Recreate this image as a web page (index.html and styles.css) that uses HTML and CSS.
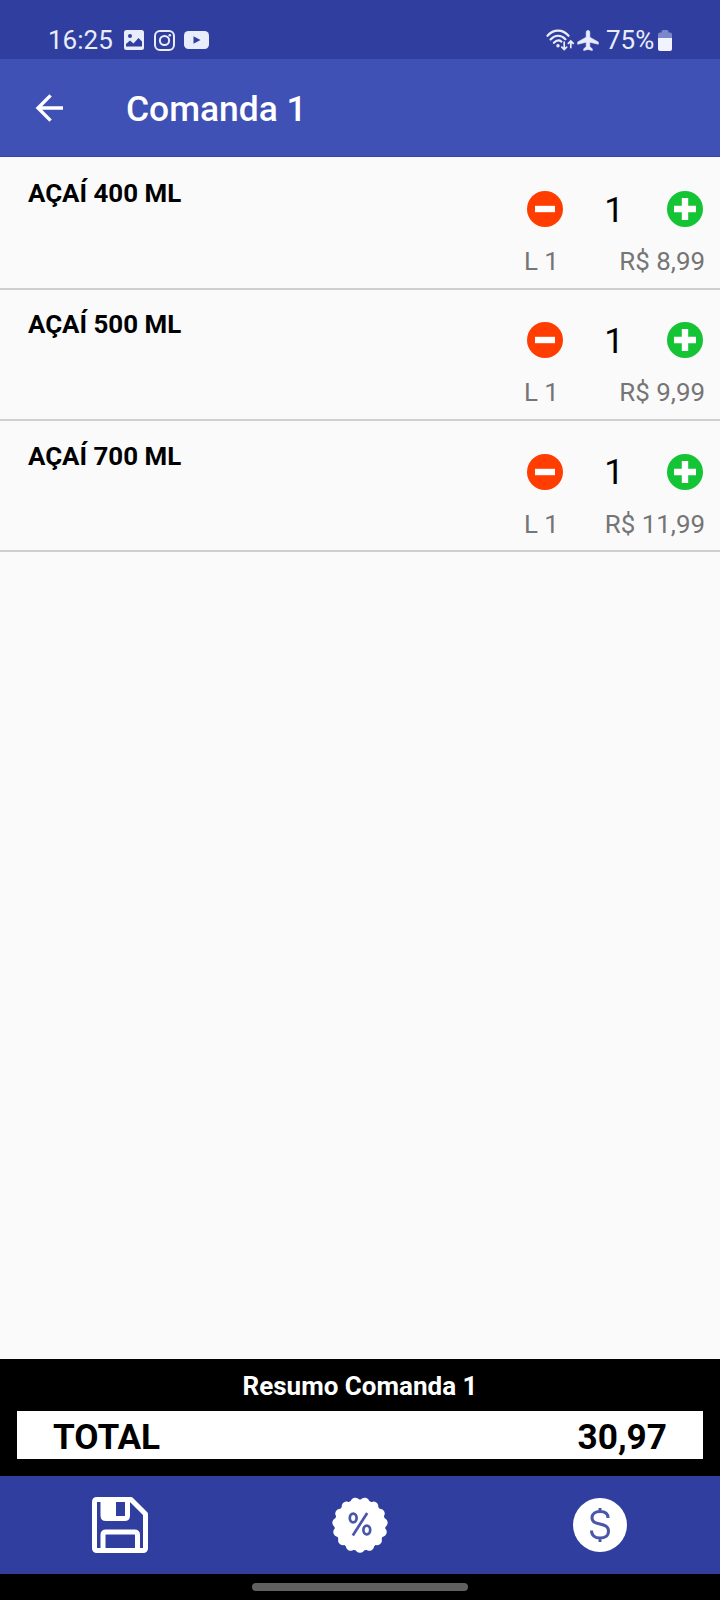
FILE: index.html
```
<!DOCTYPE html>
<html lang="pt-BR">
<head>
    <meta charset="UTF-8">
    <meta name="viewport" content="width=device-width, initial-scale=1.0">
    <title>Comanda 1</title>
    <link rel="stylesheet" href="styles.css">
</head>
<body>

    <!-- Status bar -->
    <div class="status-bar">
        <span class="clock">16:25</span>
        <svg class="icon-picture" width="20" height="20" viewBox="0 0 20 20">
            <rect width="20" height="20" rx="2.5" fill="#e9ecfb"/>
            <circle cx="6" cy="6" r="2" fill="#303f9f"/>
            <path d="M2 16.5V14L6 10.5L9.5 13.5L14.5 8L18 11.5V16.5Z" fill="#303f9f"/>
        </svg>
        <svg class="icon-instagram" width="21" height="21" viewBox="0 0 21 21" fill="none" stroke="#e9ecfb" stroke-width="2">
            <rect x="1" y="1" width="19" height="19" rx="5"/>
            <circle cx="10.5" cy="10.5" r="4.6"/>
            <circle cx="15.8" cy="5.2" r="1.3" fill="#e9ecfb" stroke="none"/>
        </svg>
        <svg class="icon-youtube" width="25" height="18" viewBox="0 0 25 18">
            <rect width="25" height="18" rx="4.5" fill="#e9ecfb"/>
            <path d="M9.5 5.2L16.5 9L9.5 12.8Z" fill="#303f9f"/>
        </svg>
        <div class="status-right">
            <svg width="28" height="22" viewBox="0 0 28 22" fill="none" stroke="#e9ecfb" stroke-width="2.2" stroke-linecap="round">
                <path d="M1.5 6.8C7.5 0 16.5 0 22.5 6.8M4.6 10.4C9.2 5.6 15 5.6 19.4 10.2M7.9 13.8C10.6 11 13.4 11 15.4 12.6"/>
                <circle cx="12" cy="16.7" r="1.7" fill="#e9ecfb" stroke="none"/>
                <path d="M18.2 13.2V20.4M15.8 18.2L18.2 20.6L20.6 18.2M24.8 18.6V12.4M22.4 14.4L24.8 12L27.2 14.4" stroke-width="1.7"/>
            </svg>
            <svg class="icon-plane" width="22" height="21" viewBox="0 0 22 21">
                <path d="M11 0.2C12.2 0.2 12.8 1.2 12.8 2.5V7.2L21.3 12V14.3L12.8 12.2V16.8L15.3 18.8V20.6L11 19.4L6.7 20.6V18.8L9.2 16.8V12.2L0.7 14.3V12L9.2 7.2V2.5C9.2 1.2 9.8 0.2 11 0.2Z" fill="#e9ecfb" stroke="#e9ecfb" stroke-width="0.6"/>
            </svg>
            <span class="battery-text">75%</span>
            <svg class="icon-battery" width="14" height="21" viewBox="0 0 14 21">
                <path d="M0 8V4.5Q0 2.5 2 2.5H3.5V1.5Q3.5 0 5 0H9Q10.5 0 10.5 1.5V2.5H12Q14 2.5 14 4.5V8Z" fill="#7b86cb"/>
                <path d="M0 8H14V19Q14 21 12 21H2Q0 21 0 19Z" fill="#f1f3ff"/>
            </svg>
        </div>
    </div>

    <!-- App bar -->
    <div class="app-bar">
        <svg width="28" height="28" viewBox="0 0 28 28" fill="none" stroke="#fff" stroke-width="3.4">
            <path d="M28 14H3M15.6 1.4L3 14L15.6 26.6"/>
        </svg>
        <h1>Comanda 1</h1>
    </div>

    <!-- Items -->
    <div class="items">
        <div class="item">
            <div class="item-name">AÇAÍ 400 ML</div>
            <div class="item-side">
                <div class="quantity">
                    <svg width="36" height="36" viewBox="0 0 36 36"><circle cx="18" cy="18" r="18" fill="#ff3d00"/><path d="M8 18H28" stroke="#fff" stroke-width="6.4"/></svg>
                    <span>1</span>
                    <svg width="36" height="36" viewBox="0 0 36 36"><circle cx="18" cy="18" r="18" fill="#14c435"/><path d="M7 18H29M18 7V29" stroke="#fff" stroke-width="6.4"/></svg>
                </div>
                <div class="price"><span>L 1</span><span>R$ 8,99</span></div>
            </div>
        </div>
        <div class="item">
            <div class="item-name">AÇAÍ 500 ML</div>
            <div class="item-side">
                <div class="quantity">
                    <svg width="36" height="36" viewBox="0 0 36 36"><circle cx="18" cy="18" r="18" fill="#ff3d00"/><path d="M8 18H28" stroke="#fff" stroke-width="6.4"/></svg>
                    <span>1</span>
                    <svg width="36" height="36" viewBox="0 0 36 36"><circle cx="18" cy="18" r="18" fill="#14c435"/><path d="M7 18H29M18 7V29" stroke="#fff" stroke-width="6.4"/></svg>
                </div>
                <div class="price"><span>L 1</span><span>R$ 9,99</span></div>
            </div>
        </div>
        <div class="item">
            <div class="item-name">AÇAÍ 700 ML</div>
            <div class="item-side">
                <div class="quantity">
                    <svg width="36" height="36" viewBox="0 0 36 36"><circle cx="18" cy="18" r="18" fill="#ff3d00"/><path d="M8 18H28" stroke="#fff" stroke-width="6.4"/></svg>
                    <span>1</span>
                    <svg width="36" height="36" viewBox="0 0 36 36"><circle cx="18" cy="18" r="18" fill="#14c435"/><path d="M7 18H29M18 7V29" stroke="#fff" stroke-width="6.4"/></svg>
                </div>
                <div class="price"><span>L 1</span><span>R$ 11,99</span></div>
            </div>
        </div>
    </div>

    <!-- Summary -->
    <div class="summary">
        <div class="summary-title">Resumo Comanda 1</div>
        <div class="total">
            <span>TOTAL</span>
            <span>30,97</span>
        </div>
    </div>

    <!-- Bottom actions -->
    <div class="actions">
        <div class="action">
            <svg width="56" height="56" viewBox="0 0 56 56" fill="none" stroke="#fff" stroke-width="5" stroke-linejoin="round">
                <path d="M5 2.5H39L53.5 17V51Q53.5 53.5 51 53.5H5Q2.5 53.5 2.5 51V5Q2.5 2.5 5 2.5Z"/>
                <path d="M11 2.5V18.5Q11 21.5 14 21.5H32.5Q35.5 21.5 35.5 18.5V2.5M11 53.5V38Q11 35 14 35H42.5Q45.5 35 45.5 38V53.5"/>
                <path d="M10 3H24V22H12Q10 22 10 20Z" fill="#fff" stroke="none"/>
            </svg>
        </div>
        <div class="action">
            <svg width="56" height="56" viewBox="0 0 56 56" fill="none">
                <circle cx="28" cy="28" r="25.6" fill="#fff"/>
                <!-- round dashes make the scalloped edge -->
                <circle cx="28" cy="28" r="23" stroke="#fff" stroke-width="9.6" stroke-linecap="round" pathLength="15" stroke-dasharray="0.001 0.999" transform="rotate(90 28 28)"/>
                <g stroke="#4a56a8" stroke-width="2.7">
                    <ellipse cx="21.2" cy="21" rx="3.4" ry="4.4"/>
                    <ellipse cx="34.8" cy="33" rx="3.4" ry="4.4"/>
                    <path d="M35.2 16L20.8 38.5"/>
                </g>
            </svg>
        </div>
        <div class="action">
            <svg width="56" height="56" viewBox="0 0 56 56" fill="none">
                <circle cx="28" cy="28" r="27" fill="#fff"/>
                <path d="M36 21C36 16.5 32.5 14.5 28 14.5C23.2 14.5 20 17 20 20.8C20 30 36.5 24 36.5 34.2C36.5 38.5 33 41 28 41C23 41 19.5 38.5 19.5 33.5M28 11V14.5M28 41V45" stroke="#4a56a8" stroke-width="3"/>
            </svg>
        </div>
    </div>

    <div class="gesture-bar"><div class="handle"></div></div>

</body>
</html>
```
FILE: styles.css
```
* {
    margin: 0;
    padding: 0;
    box-sizing: border-box;
}

body {
    font-family: Roboto, sans-serif;
    background-color: #fafafa;
    width: 720px;
    height: 1600px;
    display: flex;
    flex-direction: column;
    overflow: hidden;
}

svg {
    display: block;
    flex-shrink: 0;
}

/* Status bar */
.status-bar {
    height: 59px;
    padding: 21px 48px 0;
    display: flex;
    align-items: center;
    background-color: #303f9f;
    color: #e9ecfb;
    font-size: 26px;
    line-height: 36px;
}

.clock {
    width: 76px;
}

.icon-instagram {
    margin-left: 10px;
}

.icon-youtube {
    margin-left: 9px;
}

.status-right {
    margin-left: auto;
    display: flex;
    align-items: center;
}

.icon-plane {
    margin-left: 3px;
}

.battery-text {
    margin-left: 7px;
    width: 50px;
}

.icon-battery {
    margin-left: 2px;
}

/* App bar */
.app-bar {
    height: 98px;
    padding-left: 35px;
    display: flex;
    align-items: center;
    background-color: #3f51b5;
    border-bottom: 1px solid #36469f;
    color: #fff;
}

.app-bar h1 {
    margin-left: 63px;
    padding-top: 2px;
    font-size: 35.4px;
    font-weight: 500;
}

/* Items */
.items {
    flex: 1;
}

.item {
    height: 131.4px;
    padding: 19.6px 15px 0 28px;
    display: flex;
    justify-content: space-between;
    border-bottom: 2px solid #cfcfcf;
}

.item:first-child {
    height: 132.6px;
    padding-top: 21px;
}

.item-name {
    font-size: 25.9px;
    line-height: 30px;
    font-weight: 700;
    color: #000;
}

.item-side {
    width: 181px;
    padding-top: 13px;
}

.quantity {
    padding: 0 2px 0 3px;
    display: flex;
    align-items: center;
    justify-content: space-between;
    height: 36px;
    font-size: 35px;
    color: #000;
}

.quantity span {
    padding: 2px 2px 0 0;
}

.price {
    margin-top: 19px;
    display: flex;
    justify-content: space-between;
    font-size: 25.9px;
    line-height: 30px;
    color: #757575;
}

/* Summary */
.summary {
    height: 117px;
    padding: 12px 17px 0;
    background-color: #000;
}

.summary-title {
    font-size: 26px;
    line-height: 30px;
    font-weight: 700;
    color: #fff;
    text-align: center;
}

.total {
    height: 48px;
    margin-top: 10px;
    padding: 3px 36px 0;
    display: flex;
    align-items: center;
    justify-content: space-between;
    background-color: #fff;
    color: #000;
    font-size: 35.2px;
    font-weight: 700;
}

/* Bottom actions */
.actions {
    height: 98px;
    display: flex;
    background-color: #303f9f;
}

.action {
    flex: 1;
    display: flex;
    align-items: center;
    justify-content: center;
}

.gesture-bar {
    height: 26px;
    padding-top: 9px;
    background-color: #000;
}

.handle {
    width: 216px;
    height: 8px;
    margin: 0 auto;
    border-radius: 4px;
    background-color: #606060;
}
```
